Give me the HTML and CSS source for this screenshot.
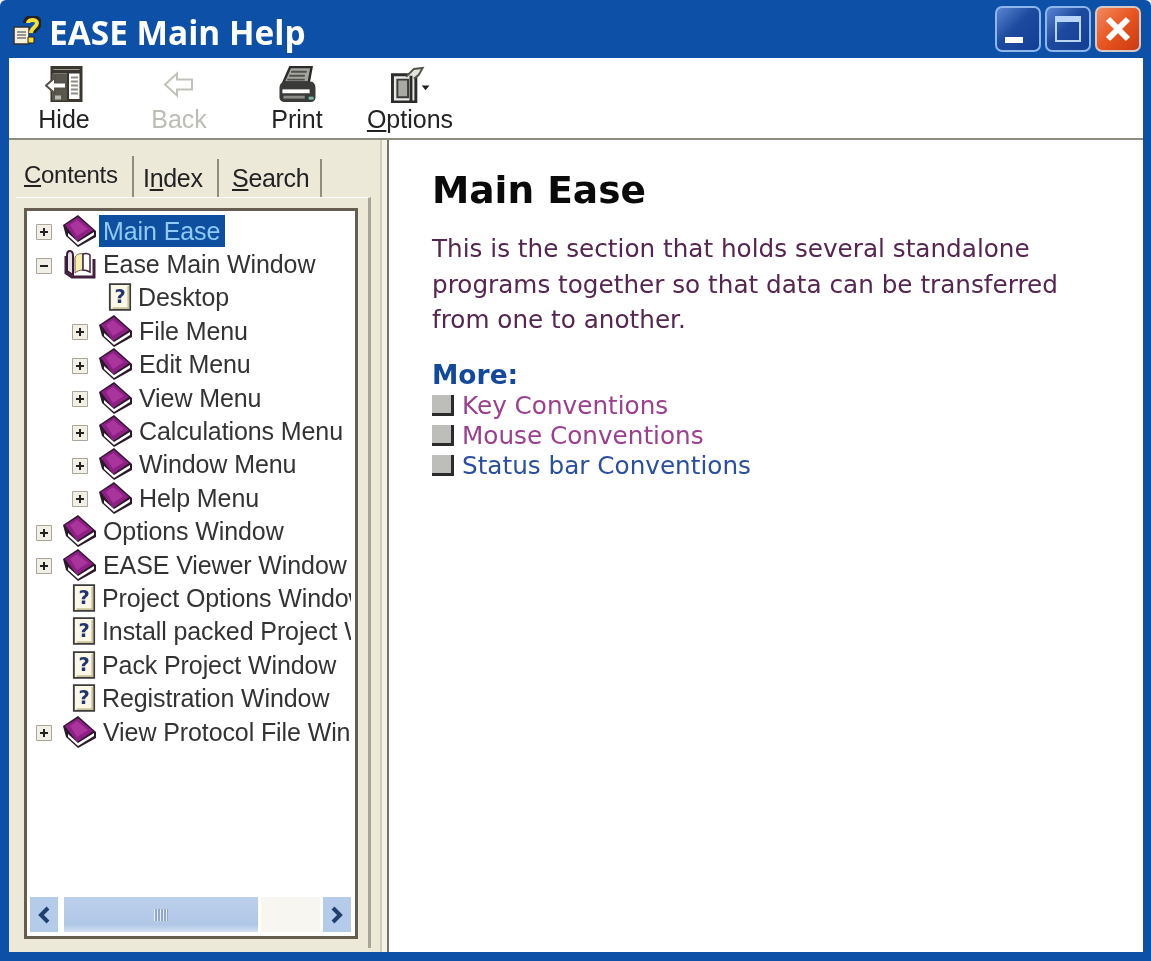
FILE: index.html
```html
<!DOCTYPE html>
<html lang="en">
<head>
  <meta charset="UTF-8">
  <title>EASE Main Help</title>
  <link rel="stylesheet" href="styles.css">
</head>
<body>

  <svg class="defs" width="0" height="0">
    <symbol id="book" viewBox="0 0 34 32">
      <path d="M15 0 33 16v6L15 32 3 21 0 10z" fill="#2a1a2a"/>
      <path d="M15 2 30 15 14 26 2 10z" fill="#8d1f85"/>
      <path d="M14 5 25 14 14 21 7 10z" fill="#a8349c"/>
      <path d="M5 18 15 27 31 17v3L15 30 5 21z" fill="#fff"/>
    </symbol>
    <symbol id="book-open" viewBox="0 0 34 30">
      <path d="M3 7v17l6 4h22V10" fill="#fff" stroke="#43203f" stroke-width="3"/>
      <path d="M7 2C5 2 4 4 4 6v16l6 4V7c0-3-1-5-3-5z" fill="#e6dfe4" stroke="#3a1a38" stroke-width="2"/>
      <path d="M12 8c2-3 5-4 8-3v16c-3 0-6 1-8 3z" fill="#f4f0b0" stroke="#6a6050"/>
      <path d="M20 5c3-1 6 0 7 1v17c-2-1-5-2-7-2z" fill="#fff" stroke="#43203f" stroke-width="1.5"/>
    </symbol>
    <symbol id="topic" viewBox="0 0 26 30">
      <path d="M2 1h22v28H2z" fill="#fbf8e8" stroke="#3b3b3b" stroke-width="2"/>
      <path d="M22 3v24H5" fill="none" stroke="#c9c29a" stroke-width="2"/>
      <text x="13" y="22" class="topic-mark">?</text>
    </symbol>
    <symbol id="plus" viewBox="0 0 16 16">
      <path d="M.5.5h15v15H.5z" fill="#f1efe6" stroke="#aaa79a"/>
      <path d="M4 8h8M8 4v8" stroke="#222" stroke-width="2"/>
    </symbol>
    <symbol id="minus" viewBox="0 0 16 16">
      <path d="M.5.5h15v15H.5z" fill="#f1efe6" stroke="#aaa79a"/>
      <path d="M4 8h8" stroke="#222" stroke-width="2"/>
    </symbol>
  </svg>

  <div class="window">
    <div class="titlebar">
      <svg class="app-icon" viewBox="0 0 28 30" width="28" height="30">
        <path d="M1 11h15v17H1z" fill="#f4f0dc" stroke="#333" stroke-width="1.5"/>
        <path d="M4 16h9M4 19h9M4 22h9" stroke="#777" stroke-width="1.5"/>
        <path d="M13 7c0-7 13-7 13 0 0 5-6 5-6 10" fill="none" stroke="#222" stroke-width="6"/>
        <path d="M15 7c0-4 9-4 9 0 0 4-6 5-6 10" fill="none" stroke="#f3e03a" stroke-width="4"/>
        <path d="M15 21h6v6h-6z" fill="#f3e03a" stroke="#222"/>
      </svg>
      <h1 class="title">EASE Main Help</h1>
      <div class="controls">
        <div class="ctl ctl-blue">
          <span class="min-mark"></span>
        </div>
        <div class="ctl ctl-blue">
          <span class="max-mark"></span>
        </div>
        <div class="ctl ctl-red">
          <svg viewBox="0 0 30 30" width="30" height="30">
            <path d="M5 5l20 20M25 5 5 25" stroke="#fff" stroke-width="6"/>
          </svg>
        </div>
      </div>
    </div>

    <div class="toolbar">
      <div class="tool">
        <svg viewBox="0 0 38 36" width="38" height="36">
          <path d="M7 1h29v33H7z" fill="#fff" stroke="#3a372f" stroke-width="3"/>
          <path d="M7 5h29" stroke="#3a372f" stroke-width="4"/>
          <path d="M7 7h15v27H7z" fill="#5a574e"/>
          <path d="M23 6v28" stroke="#3a372f" stroke-width="2"/>
          <path d="M26 11h7M26 15h7M26 19h7M26 23h7M26 27h7" stroke="#8c8c86" stroke-width="2"/>
          <path d="M1 19 10 11v5h11v6H10v5z" fill="#fff" stroke="#55524a" stroke-width="2"/>
          <path d="M10 29h6v4h-6z" fill="#bbb"/>
        </svg>
        <span>Hide</span>
      </div>
      <div class="tool tool-off">
        <svg viewBox="0 0 32 28" width="32" height="28">
          <path d="M2 14 14 3v6h15v10H14v6z" fill="#fff" stroke="#c2c2bb" stroke-width="2"/>
        </svg>
        <span>Back</span>
      </div>
      <div class="tool">
        <svg viewBox="0 0 40 38" width="40" height="38">
          <path d="M13 1h22l-3 16H6z" fill="#a5a5a0" stroke="#2b2b2b" stroke-width="2.5"/>
          <path d="M14 6h16M12 10h16M10 14h18" stroke="#4f4f4c" stroke-width="2"/>
          <path d="M2 23c0-4 2-7 6-7h26c3 0 5 3 5 7v9c0 3-2 5-5 5H8c-4 0-6-2-6-5z" fill="#3a3a38"/>
          <path d="M5 24h28v4H5z" fill="#fff"/>
          <path d="M6 32h22" stroke="#8c8c88" stroke-width="3"/>
          <path d="M32 33h5" stroke="#7dbdac" stroke-width="3"/>
        </svg>
        <span>Print</span>
      </div>
      <div class="tool">
        <svg viewBox="0 0 40 38" width="40" height="38">
          <path d="M2 9h24v28H2z" fill="#e8e8e4" stroke="#2b2b2b" stroke-width="3"/>
          <path d="M7 14h11v18H7z" fill="#a8a8a4" stroke="#3a3a38" stroke-width="2"/>
          <path d="M16 11 24 3l9-1-4 7-5 4" fill="#e5e5e0" stroke="#55524a" stroke-width="2"/>
          <path d="M21 10v26" stroke="#2b2b2b" stroke-width="3"/>
          <path d="M32 20h8l-4 5z" fill="#222"/>
        </svg>
        <span><u>O</u>ptions</span>
      </div>
    </div>

    <div class="panes">
      <div class="nav-pane">
        <div class="tabs">
          <div class="tab tab-active"><u>C</u>ontents</div>
          <div class="tab">I<u>n</u>dex</div>
          <div class="tab"><u>S</u>earch</div>
        </div>
        <div class="tab-body">
          <div class="tree-box">
            <ul class="tree">
              <li class="row"><svg class="exp"><use href="#plus"/></svg><svg class="ico"><use href="#book"/></svg><span class="label selected">Main Ease</span></li>
              <li class="row"><svg class="exp"><use href="#minus"/></svg><svg class="ico"><use href="#book-open"/></svg><span class="label">Ease Main Window</span></li>
              <li class="row sub"><span class="exp"></span><svg class="ico doc"><use href="#topic"/></svg><span class="label">Desktop</span></li>
              <li class="row sub"><svg class="exp"><use href="#plus"/></svg><svg class="ico"><use href="#book"/></svg><span class="label">File Menu</span></li>
              <li class="row sub"><svg class="exp"><use href="#plus"/></svg><svg class="ico"><use href="#book"/></svg><span class="label">Edit Menu</span></li>
              <li class="row sub"><svg class="exp"><use href="#plus"/></svg><svg class="ico"><use href="#book"/></svg><span class="label">View Menu</span></li>
              <li class="row sub"><svg class="exp"><use href="#plus"/></svg><svg class="ico"><use href="#book"/></svg><span class="label">Calculations Menu</span></li>
              <li class="row sub"><svg class="exp"><use href="#plus"/></svg><svg class="ico"><use href="#book"/></svg><span class="label">Window Menu</span></li>
              <li class="row sub"><svg class="exp"><use href="#plus"/></svg><svg class="ico"><use href="#book"/></svg><span class="label">Help Menu</span></li>
              <li class="row"><svg class="exp"><use href="#plus"/></svg><svg class="ico"><use href="#book"/></svg><span class="label">Options Window</span></li>
              <li class="row"><svg class="exp"><use href="#plus"/></svg><svg class="ico"><use href="#book"/></svg><span class="label">EASE Viewer Window</span></li>
              <li class="row"><span class="exp"></span><svg class="ico doc"><use href="#topic"/></svg><span class="label">Project Options Window</span></li>
              <li class="row"><span class="exp"></span><svg class="ico doc"><use href="#topic"/></svg><span class="label">Install packed Project Window</span></li>
              <li class="row"><span class="exp"></span><svg class="ico doc"><use href="#topic"/></svg><span class="label">Pack Project Window</span></li>
              <li class="row"><span class="exp"></span><svg class="ico doc"><use href="#topic"/></svg><span class="label">Registration Window</span></li>
              <li class="row"><svg class="exp"><use href="#plus"/></svg><svg class="ico"><use href="#book"/></svg><span class="label">View Protocol File Window</span></li>
            </ul>
            <div class="hscroll">
              <div class="sb-btn">
                <svg viewBox="0 0 14 18" width="14" height="18"><path d="M11 2 4 9l7 7" fill="none" stroke="#1f3f6f" stroke-width="4"/></svg>
              </div>
              <div class="sb-thumb">
                <span class="grip"></span>
              </div>
              <div class="sb-track"></div>
              <div class="sb-btn">
                <svg viewBox="0 0 14 18" width="14" height="18"><path d="M3 2l7 7-7 7" fill="none" stroke="#1f3f6f" stroke-width="4"/></svg>
              </div>
            </div>
          </div>
        </div>
      </div>

      <div class="splitter"></div>

      <div class="content">
        <h2>Main Ease</h2>
        <p>This is the section that holds several standalone programs together so that data can be transferred from one to another.</p>
        <h3>More:</h3>
        <ul class="links">
          <li><span class="bullet"></span><a class="visited">Key Conventions</a></li>
          <li><span class="bullet"></span><a class="visited">Mouse Conventions</a></li>
          <li><span class="bullet"></span><a>Status bar Conventions</a></li>
        </ul>
      </div>
    </div>
  </div>

</body>
</html>
```

FILE: styles.css
```css
html, body {
  margin: 0;
  height: 100%;
  background-color: #fff;
}

.defs {
  position: absolute;
}

.topic-mark {
  font-family: "DejaVu Sans", sans-serif;
  font-size: 21px;
  font-weight: bold;
  fill: #23356e;
  text-anchor: middle;
}

.window {
  box-sizing: border-box;
  width: 1151px;
  height: 961px;
  padding: 0 8px 9px 9px;
  background-color: #0d50a8;
  border-radius: 6px 6px 0 0;
  display: flex;
  flex-direction: column;
  filter: blur(0.6px);
}

/* barra de titulo */
.titlebar {
  height: 58px;
  flex: none;
  display: flex;
  align-items: center;
}

.app-icon {
  margin: 4px 8px 0 4px;
}

.title {
  margin: 0;
  padding-top: 6px;
  color: #fff;
  font-family: "Open Sans", sans-serif;
  font-size: 33.4px;
  font-weight: bold;
}

.controls {
  margin-left: auto;
  margin-right: 2px;
  display: flex;
  gap: 4px;
}

.ctl {
  box-sizing: border-box;
  width: 46px;
  height: 46px;
  border: 2px solid #8db6ec;
  border-radius: 7px;
  display: flex;
  align-items: center;
  justify-content: center;
  position: relative;
}

.ctl-blue {
  background: linear-gradient(135deg, #5a85d2, #1d4a9e 45%, #123f93);
}

.ctl-red {
  background: linear-gradient(135deg, #f08a60, #e9541f 50%, #c93a12);
  border-color: #d8c8c4;
}

.min-mark {
  position: absolute;
  left: 8px;
  bottom: 7px;
  width: 18px;
  height: 6px;
  background-color: #fff;
}

.max-mark {
  box-sizing: border-box;
  width: 26px;
  height: 26px;
  border: 2px solid #b8d4f8;
  border-top-width: 6px;
}

/* barra de ferramentas */
.toolbar {
  height: 82px;
  flex: none;
  box-sizing: border-box;
  background-color: #fff;
  border-bottom: 2px solid #8f8c80;
  display: grid;
  grid-template-columns: 110px 120px 116px 110px;
  font-family: "Liberation Sans", sans-serif;
  font-size: 25px;
  color: #222;
}

.tool {
  display: flex;
  flex-direction: column;
  align-items: center;
  justify-content: flex-end;
  gap: 2px;
  padding-bottom: 4px;
}

.tool svg {
  height: 37px;
}

.tool-off {
  color: #bdbdb6;
}

/* paineis */
.panes {
  flex: 1;
  display: flex;
  min-height: 0;
}

.nav-pane {
  box-sizing: border-box;
  width: 362px;
  flex: none;
  background-color: #ece9d8;
  padding: 13px 0 4px 7px;
  display: flex;
  flex-direction: column;
  font-family: "Liberation Sans", sans-serif;
  color: #333;
}

.tabs {
  display: flex;
  align-items: flex-end;
  height: 44px;
  flex: none;
  font-size: 25px;
  color: #222;
}

.tab {
  box-sizing: border-box;
  height: 38px;
  padding: 0 5px 0 9px;
  border-right: 2px solid #8f8c80;
  line-height: 38px;
  letter-spacing: -0.3px;
}

.tab-active {
  height: 41px;
  width: 118px;
  padding-left: 8px;
  font-size: 24px;
  line-height: 38px;
}

.tab:nth-child(2) {
  width: 85px;
}

.tab:nth-child(3) {
  width: 103px;
  padding-left: 13px;
}

.tab-body {
  flex: 1;
  min-height: 0;
  border-top: 1px solid #fff;
  border-right: 3px solid #a8a596;
  padding: 10px 10px 0 8px;
  display: flex;
}

.tree-box {
  box-sizing: border-box;
  flex: 1;
  min-width: 0;
  height: 731px;
  background-color: #fff;
  border: 3px solid #645d50;
  display: flex;
  flex-direction: column;
  padding: 3px 4px 4px 3px;
}

.tree {
  list-style: none;
  margin: 0;
  padding: 0;
  flex: 1;
  overflow: hidden;
}

.row {
  height: 33.4px;
  display: flex;
  align-items: center;
  white-space: nowrap;
  font-size: 25px;
  letter-spacing: -0.1px;
}

.row.sub {
  padding-left: 36px;
}

.exp {
  width: 16px;
  height: 16px;
  flex: none;
  margin: 3px 11px 0 6px;
}

.ico {
  width: 34px;
  height: 32px;
  flex: none;
}

.ico.doc {
  width: 24px;
  height: 30px;
  margin-left: 9px;
}

.label {
  margin-left: 2px;
  padding: 0 5px 0 4px;
  line-height: 32px;
}

.selected {
  background-color: #0f4f9f;
  color: #8fcaf8;
}

.hscroll {
  height: 35px;
  flex: none;
  display: flex;
  gap: 3px;
}

.sb-btn {
  width: 28px;
  flex: none;
  background-color: #b4cbe9;
  display: flex;
  align-items: center;
  justify-content: center;
}

.sb-thumb {
  width: 194px;
  margin-left: 3px;
  flex: none;
  background: linear-gradient(#bcd0ec, #b0c7e6 80%, #d5e2f3);
  display: flex;
  align-items: center;
  justify-content: center;
}

.grip {
  width: 14px;
  height: 12px;
  background: repeating-linear-gradient(90deg, #e8eef8 0 1px, #92a8ca 1px 3px);
}

.sb-track {
  flex: 1;
  background-color: #f7f6f1;
}

.splitter {
  width: 18px;
  flex: none;
  background: linear-gradient(90deg, #ece9d8 0 9px, #cfccbc 9px 11px, #f5f3e8 11px);
  border-right: 2px solid #77746a;
  box-sizing: border-box;
}

/* conteudo */
.content {
  flex: 1;
  min-width: 0;
  background-color: #fff;
  padding: 27px 70px 0 43px;
  font-family: "DejaVu Sans", sans-serif;
}

.content h2 {
  margin: 0 0 18px;
  font-size: 37.5px;
  line-height: 46px;
  color: #0a0a0a;
}

.content p {
  margin: 0 0 21px;
  font-size: 24.7px;
  line-height: 35.5px;
  color: #55264f;
}

.content h3 {
  margin: 0;
  font-size: 26.5px;
  line-height: 32px;
  color: #12499c;
}

.links {
  list-style: none;
  margin: 0;
  padding: 0;
  font-size: 24.7px;
}

.links li {
  height: 30px;
  display: flex;
  align-items: center;
}

.links a {
  color: #2a4fa2;
}

.links a.visited {
  color: #9c3f8e;
}

.bullet {
  box-sizing: border-box;
  width: 22px;
  height: 21px;
  margin-right: 8px;
  background-color: #bdbdb9;
  border-right: 3px solid #2a2a2a;
  border-bottom: 3px solid #2a2a2a;
}
```
